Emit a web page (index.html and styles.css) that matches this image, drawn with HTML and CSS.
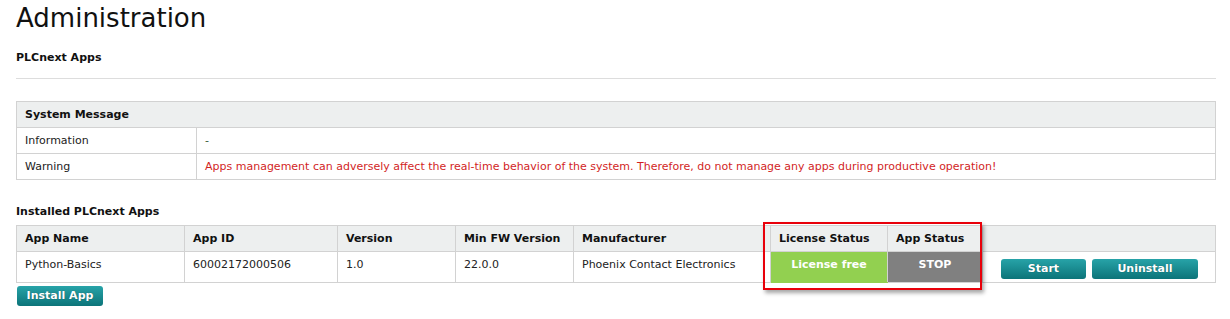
FILE: index.html
```html
<!DOCTYPE html>
<html>
<head>
<meta charset="utf-8" />
<title>Administration</title>
<link rel="stylesheet" href="styles.css">
</head>
<body>
	<div class="page">
		<h1 class="pageTit">Administration</h1>
		<h2 class="subTit">PLCnext Apps</h2>
		<div class="line"></div>

		<table class="grid sysMsg">
			<colgroup>
				<col class="c180" />
				<col />
			</colgroup>
			<tr class="head"><th colspan="2">System Message</th></tr>
			<tr><td>Information</td><td class="dash">-</td></tr>
			<tr><td>Warning</td><td class="warn">Apps management can adversely affect the real-time behavior of the system. Therefore, do not manage any apps during productive operation!</td></tr>
		</table>

		<h2 class="subTit second">Installed PLCnext Apps</h2>
		<div class="appsWrap">
			<table class="grid apps">
				<colgroup>
					<col class="cName" />
					<col class="cId" />
					<col class="cVer" />
					<col class="cFw" />
					<col class="cMan" />
					<col class="cLic" />
					<col class="cStat" />
					<col />
				</colgroup>
				<tr class="head">
					<th>App Name</th>
					<th>App ID</th>
					<th>Version</th>
					<th>Min FW Version</th>
					<th>Manufacturer</th>
					<th>License Status</th>
					<th>App Status</th>
					<th></th>
				</tr>
				<tr class="row">
					<td>Python-Basics</td>
					<td>60002172000506</td>
					<td>1.0</td>
					<td>22.0.0</td>
					<td>Phoenix Contact Electronics</td>
					<td class="lic">License free</td>
					<td class="stat">STOP</td>
					<td class="btns"><span class="btn start">Start</span><span class="btn uninst">Uninstall</span></td>
				</tr>
			</table>
			<div class="mark"></div>
		</div>
		<span class="btn install">Install App</span>
	</div>
</body>
</html>
```

FILE: styles.css
```css
*{ padding:0; margin:0;}

body{ font-family:"DejaVu Sans", Verdana, sans-serif; font-size:11px; color:#222; background:#FFF;}
.page{ padding:0 14px 0 16px;}

.pageTit{ font-size:26px; font-weight:normal; line-height:30px; padding-top:3px; color:#111;}
.subTit{ font-size:11px; font-weight:bold; line-height:14px; margin-top:18px; color:#111;}
.subTit.second{ margin-top:25px;}
.line{ height:1px; background:#DDD; margin-top:13px;}

.grid{ width:1200px; border-collapse:collapse; table-layout:fixed;}
.grid th,.grid td{ border:1px solid #D2D2D2; text-align:left; padding:0 8px; white-space:nowrap; overflow:hidden;}
.grid .head th{ background:#EDEFEF; font-weight:bold; color:#111;}

.sysMsg{ margin-top:22px;}
.sysMsg .c180{ width:180px;}
.sysMsg th,.sysMsg td{ height:25px;}
.sysMsg .dash{ color:#3A5A3A;}
.sysMsg .warn{ color:#D21F1F;}

.apps .cName{ width:168px;}
.apps .cId{ width:153px;}
.apps .cVer{ width:118px;}
.apps .cFw{ width:118px;}
.apps .cMan{ width:197px;}
.apps .cLic{ width:117px;}
.apps .cStat{ width:95px;}

.appsWrap{ position:relative; margin-top:6px; width:1200px;}
.apps .head th{ height:25px;}
.apps .row td{ height:23px; padding-top:6px; vertical-align:top;}
.apps .row .lic{ background:#92D050; color:#FFF; font-weight:bold; text-align:center; border-color:#92D050 #D2D2D2;}
.apps .row .stat{ background:#808080; color:#FFF; font-weight:bold; text-align:center;}
.apps .row .btns{ padding:7px 0 0 18px;}

.mark{ position:absolute; left:747px; top:-3px; width:215px; height:64px; border:2px solid #E8000A; box-shadow:2px 3px 4px rgba(0,0,0,0.35);}

.btn{ display:inline-block; height:20px; line-height:20px; text-align:center; color:#FFF; font-weight:bold; font-size:11px; border-radius:3px; background:linear-gradient(#27A3A8,#0C7479); text-shadow:0 0 1px rgba(0,0,0,0.4); vertical-align:top;}
.btn.start{ width:85px;}
.btn.uninst{ width:106px; margin-left:6px;}
.btn.install{ width:86px; margin:3px 0 0 1px;}
```
